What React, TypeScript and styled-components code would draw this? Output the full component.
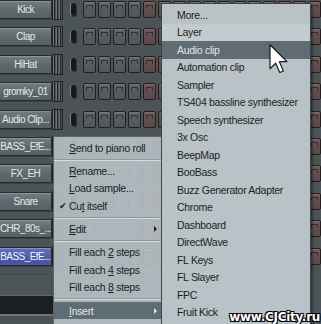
import React from "react";
import styled, { createGlobalStyle, css } from "styled-components";

const GlobalStyle = createGlobalStyle`
  html, body { margin: 0; padding: 0; background: #4b5357; }
  body { font-family: "Liberation Sans", Arial, sans-serif; }
`;

const Page = styled.div`
  position: relative;
  width: 321px;
  height: 324px;
  overflow: hidden;
  background: #4b5357;
`;

const Rack = styled.div`
  display: grid;
  grid-auto-rows: 27.4px;
`;

const Row = styled.div`
  display: flex;
  align-items: flex-start;
`;

const ChannelButton = styled.div<{ $selected?: boolean; $blank?: boolean }>`
  width: 52px;
  height: 19px;
  box-sizing: border-box;
  display: flex;
  align-items: center;
  justify-content: center;
  font-size: 10px;
  letter-spacing: -0.55px;
  color: #e3e9ec;
  white-space: nowrap;
  overflow: hidden;
  border: 1px solid #262b2e;
  border-left: none;
  border-radius: 0 2px 2px 0;
  background: linear-gradient(#737c80, #5e676b 55%, #586064);
  box-shadow: inset 0 1px 0 #8a9498, 0 1px 0 #3a4144;
  ${(p) =>
    p.$selected &&
    css`
      background: linear-gradient(#6270b8, #4e5ca4 55%, #4754a0);
      box-shadow: inset 0 1px 0 #8290d0, 0 1px 0 #3a4144;
      color: #eef0ff;
    `}
  ${(p) =>
    p.$blank &&
    css`
      background: #4e5559;
      box-shadow: none;
      border-color: #40474b;
      height: 25px;
    `}
`;

const Grip = styled.div`
  width: 11px;
  height: 21px;
  margin-top: -1px;
  box-sizing: border-box;
  border: 1px solid #1f2426;
  background: repeating-linear-gradient(
    90deg,
    #6b7478 0px,
    #6b7478 1px,
    #1e2325 1px,
    #1e2325 2px,
    #4d5559 2px,
    #4d5559 3px
  );
`;

const Led = styled.div`
  width: 5px;
  height: 13px;
  margin: 3px 0 0 8px;
  border-radius: 3px;
  background: #16191b;
  box-shadow: -1px 0 0 #77838a, 1px 1px 0 #2c3235;
`;

const Steps = styled.div`
  display: flex;
  gap: 2px;
  margin: 1px 0 0 7px;
`;

const Step = styled.div<{ $red?: boolean }>`
  position: relative;
  flex: none;
  width: 13px;
  height: 17px;
  box-sizing: border-box;
  border: 1px solid #1c2022;
  border-radius: 2px;
  background: linear-gradient(#62696d, #575e62 40%, #50575b);
  box-shadow: inset 0 1px 0 #727a7e;
  &::before {
    content: "";
    position: absolute;
    left: 2px;
    right: 2px;
    top: 3px;
    height: 3px;
    border: 1px solid #2c3234;
    border-bottom: none;
    border-radius: 1px 1px 0 0;
  }
  ${(p) =>
    p.$red &&
    css`
      border-color: #241c1d;
      background: linear-gradient(#6e5a5b, #635051 40%, #5b494a);
      box-shadow: inset 0 1px 0 #806c6d;
      &::before { border-color: #3a2c2d; }
    `}
`;

const BottomBar = styled.div`
  height: 18px;
  margin-top: -6px;
  background: #1b1f21;
  border-top: 1px solid #5d666a;
  border-bottom: 2px solid #6b7478;
  width: 53px;
`;

const Menu = styled.div<{ $translucent?: boolean }>`
  position: absolute;
  box-sizing: border-box;
  padding: 2px 0;
  font-size: 10.5px;
  letter-spacing: -0.3px;
  color: #1a1f22;
  background: #b9c2c6;
  border: 1px solid #3c4448;
  box-shadow: 2px 2px 2px rgba(0, 0, 0, 0.35);
  ${(p) =>
    p.$translucent &&
    css`
      background: rgba(184, 193, 197, 0.9);
      border-color: rgba(40, 46, 50, 0.6);
    `}
`;

const MainMenu = styled(Menu)`
  left: 53px;
  top: 136px;
  width: 110px;
  height: 190px;
`;

const SubMenu = styled(Menu)`
  left: 161px;
  top: 3px;
  width: 150px;
  height: 330px;
`;

const Item = styled.div<{ $active?: boolean; $light?: boolean }>`
  position: relative;
  height: 17.5px;
  display: flex;
  align-items: center;
  padding-left: 15px;
  white-space: pre;
  u { text-decoration: underline; text-underline-offset: 1px; }
  ${(p) =>
    p.$light &&
    css`
      background: #c3cbcf;
    `}
  ${(p) =>
    p.$active &&
    css`
      background: #5f6c73;
      color: #dfe6ea;
    `}
`;

const Label = styled.span`
  white-space: pre;
`;

const Check = styled.span`
  position: absolute;
  left: 5px;
  font-size: 9px;
`;

const Arrow = styled.span`
  position: absolute;
  right: 5px;
  width: 0;
  height: 0;
  border-top: 3px solid transparent;
  border-bottom: 3px solid transparent;
  border-left: 3px solid currentColor;
`;

const Separator = styled.div`
  height: 5.7px;
  display: flex;
  align-items: center;
  &::after {
    content: "";
    flex: 1;
    height: 1px;
    background: #8e989d;
    box-shadow: 0 1px 0 #d4dbde;
  }
`;

const Cursor = styled.svg`
  position: absolute;
  left: 269px;
  top: 44px;
`;

const Watermark = styled.div`
  position: absolute;
  right: 1px;
  bottom: 0px;
  line-height: 14px;
  font-family: "DejaVu Sans", Verdana, sans-serif;
  font-weight: bold;
  font-size: 12px;
  color: #ffffff;
  letter-spacing: -0.3px;
  text-shadow: 1px 1px 0 #000, -1px -1px 0 #000, 1px -1px 0 #000, -1px 1px 0 #000;
`;

type Channel = { name: string; selected?: boolean; blank?: boolean };

const channels: Channel[] = [
  { name: "Kick" },
  { name: "Clap" },
  { name: "HiHat" },
  { name: "gromky_01" },
  { name: "Audio Clip..." },
  { name: "BASS_EfE..." },
  { name: "FX_EH" },
  { name: "Snare" },
  { name: "CHR_80s_..." },
  { name: "BASS_EfE...", selected: true },
  { name: "", blank: true },
];

const subItems = [
  "More...",
  "Layer",
  "Audio clip",
  "Automation clip",
  "Sampler",
  "TS404 bassline synthesizer",
  "Speech synthesizer",
  "3x Osc",
  "BeepMap",
  "BooBass",
  "Buzz Generator Adapter",
  "Chrome",
  "Dashboard",
  "DirectWave",
  "FL Keys",
  "FL Slayer",
  "FPC",
  "Fruit Kick",
];

export default function App() {
  return (
    <Page>
      <GlobalStyle />
      <Rack>
        {channels.map((c, i) => (
          <Row key={i}>
            <ChannelButton $selected={c.selected} $blank={c.blank}>
              {c.name}
            </ChannelButton>
            {!c.blank && (
              <>
                <Grip />
                <Led />
                <Steps>
                  {Array.from({ length: 16 }).map((_, s) => (
                    <Step key={s} $red={Math.floor(s / 4) % 2 === 1} />
                  ))}
                </Steps>
              </>
            )}
          </Row>
        ))}
        <BottomBar />
      </Rack>

      <MainMenu $translucent>
        <Item>
          <Label><u>S</u>end to piano roll</Label>
        </Item>
        <Separator />
        <Item>
          <Label><u>R</u>ename...</Label>
        </Item>
        <Item>
          <Label><u>L</u>oad sample...</Label>
        </Item>
        <Item>
          <Check>✔</Check>
          <Label>Cu<u>t</u>{" itself"}</Label>
        </Item>
        <Separator />
        <Item>
          <Label><u>E</u>dit</Label>
          <Arrow />
        </Item>
        <Separator />
        <Item>
          <Label>{"Fill each "}<u>2</u>{" steps"}</Label>
        </Item>
        <Item>
          <Label>{"Fill each "}<u>4</u>{" steps"}</Label>
        </Item>
        <Item>
          <Label>{"Fill each "}<u>8</u>{" steps"}</Label>
        </Item>
        <Separator />
        <Item $active>
          <Label><u>I</u>nsert</Label>
          <Arrow />
        </Item>
      </MainMenu>

      <SubMenu>
        {subItems.map((label, i) => (
          <Item key={label} $light={i === 1} $active={i === 2}>
            <Label>{label}</Label>
          </Item>
        ))}
      </SubMenu>

      <Cursor width="20" height="30" viewBox="0 0 13 20">
        <path
          d="M0.5 0.5 L0.5 16.5 L4.3 12.8 L7 19 L9.4 18 L6.8 11.8 L11.8 11.8 Z"
          fill="#ffffff"
          stroke="#1a1a1a"
          strokeWidth="0.8"
          strokeLinejoin="round"
        />
      </Cursor>

      <Watermark>www.CJCity.ru</Watermark>
    </Page>
  );
}
